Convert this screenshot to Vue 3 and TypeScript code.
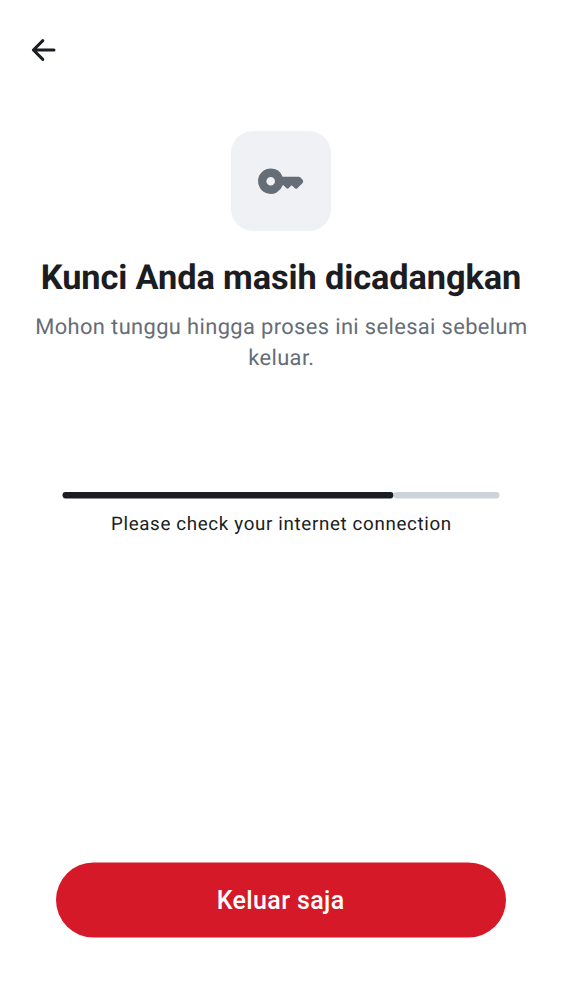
<script setup lang="ts">
const trackWidth = 437
const fillWidth = 331
</script>

<template>
  <main class="screen">
    <header class="bar">
      <button class="back" aria-label="Kembali">
        <svg width="26" height="24" viewBox="0 0 26 24" fill="none" stroke="#1b1d22" stroke-width="3" stroke-linecap="round" stroke-linejoin="round">
          <path d="M24 12H3.4M12.8 2.6 3.4 12l9.4 9.4" />
        </svg>
      </button>
    </header>
    <section class="intro">
      <div class="tile">
        <svg width="50" height="50" viewBox="0 0 50 50" fill="#656d77">
          <path fill-rule="evenodd" d="M14.7 12.5a12.7 12.7 0 1 0 11.9 17.1l.6-.6 3.3 3.2q1 .9 2 0l3.1-3 3.6 3.2q1.1.9 2.1-.1l5.3-5.4q1.4-1.6 0-3.2l-2.1-2.1q-.8-.9-1.9-.9H26.6a12.7 12.7 0 0 0-11.9-8.2Zm0 8.4a4.3 4.3 0 1 1 0 8.6 4.3 4.3 0 0 1 0-8.6Z" />
        </svg>
      </div>
      <h1>Kunci Anda masih dicadangkan</h1>
      <p class="description">Mohon tunggu hingga proses ini selesai sebelum keluar.</p>
    </section>
    <section class="status">
      <svg class="track" width="438" height="7" viewBox="0 0 438 7" role="progressbar">
        <rect x="0.5" y="0" :width="fillWidth" height="6.4" rx="3.1" fill="#1b1d22" />
        <rect :x="fillWidth + 0.5" y="0" :width="trackWidth - fillWidth" height="6.4" rx="3.1" fill="#cdd3da" />
      </svg>
      <p>Please check your internet connection</p>
    </section>
    <footer>
      <button class="leave">Keluar saja</button>
    </footer>
  </main>
</template>

<style>
body {
  background: #fff;
}
</style>

<style scoped>
.screen {
  box-sizing: border-box;
  height: 1000px;
  display: flex;
  flex-direction: column;
  background: #fff;
  color: #1b1d22;
  font-family: Roboto, sans-serif;
  text-rendering: geometricPrecision;
}
button {
  border: 0;
  padding: 0;
  font-family: inherit;
}
.bar {
  height: 100px;
  box-sizing: border-box;
  padding: 0 30px;
  display: flex;
  align-items: center;
}
.back {
  display: flex;
  background: none;
}
.intro {
  padding: 31px 31px 0;
  display: flex;
  flex-direction: column;
  align-items: center;
  text-align: center;
}
.tile {
  width: 100px;
  height: 100px;
  border-radius: 22px;
  background: #f0f1f5;
  display: grid;
  place-items: center;
}
h1 {
  margin: 26px 0 0;
  font-size: 34.35px;
  font-weight: 700;
  line-height: 43.7px;
  letter-spacing: -0.1px;
  white-space: nowrap;
}
.description {
  margin: 11px 0 0;
  padding-left: 0.8px;
  color: #656d77;
  font-size: 21.86px;
  line-height: 31.2px;
  letter-spacing: 0.38px;
}
.status {
  margin: 118px 62px 0;
}
.track {
  display: block;
}
.status p {
  margin: 13px 0 0;
  padding-left: 0.8px;
  text-align: center;
  font-size: 18.74px;
  line-height: 25px;
  letter-spacing: 0.66px;
}
footer {
  margin-top: auto;
  padding: 0 56px 63px;
}
.leave {
  display: block;
  width: 100%;
  height: 75px;
  padding-right: 0.8px;
  border-radius: 38px;
  background: #d51928;
  color: #fff;
  font-size: 25px;
  font-weight: 500;
  letter-spacing: 0.38px;
  transform: translateY(0.5px);
}
</style>
